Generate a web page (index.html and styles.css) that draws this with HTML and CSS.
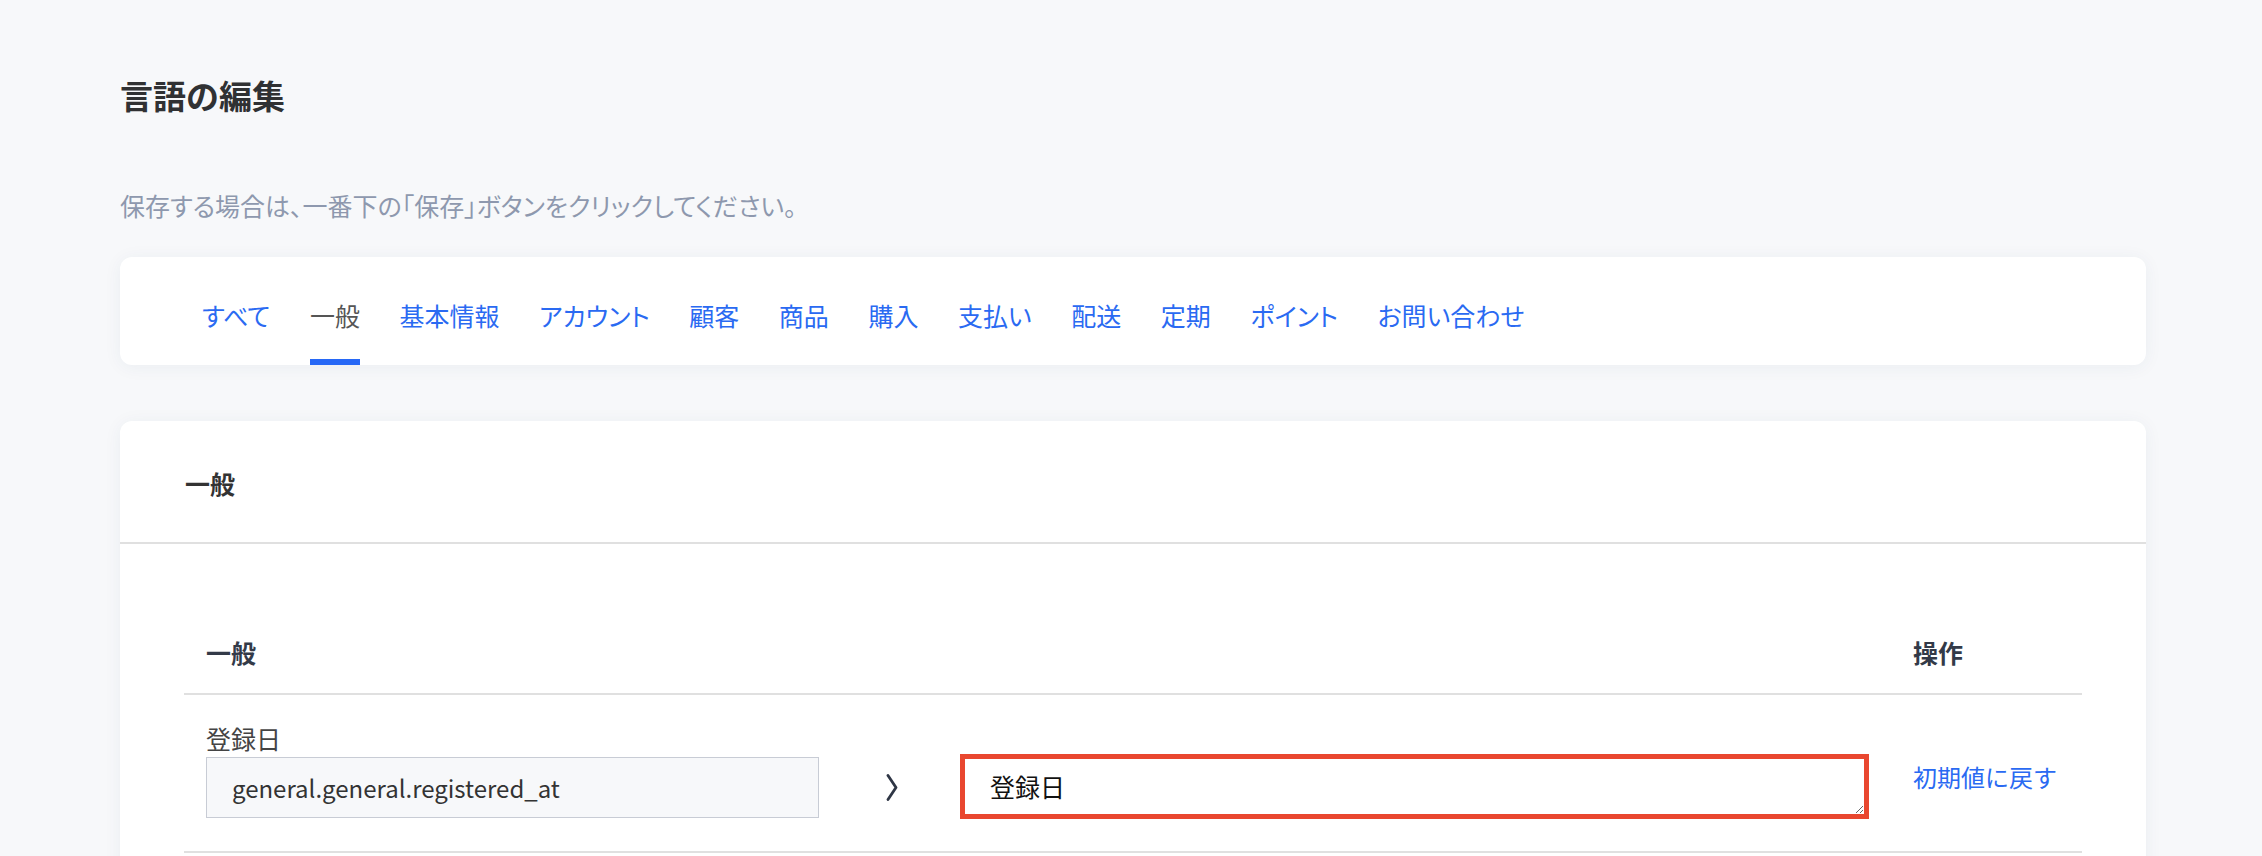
FILE: index.html
```html
<!DOCTYPE html>
<html lang="ja">
<head>
  <meta charset="UTF-8" />
  <meta name="viewport" content="width=device-width, initial-scale=1.0"/>
  <title>言語の編集</title>
  <link rel="stylesheet" href="styles.css">
</head>
<body>

<div class="page">
  <h1 class="title">言語の編集</h1>
  <p class="note">保存する場合は、一番下の「保存」ボタンをクリックしてください。</p>

  <nav class="card tabs">
    <a class="tab" href="#">すべて</a>
    <a class="tab active" href="#">一般</a>
    <a class="tab" href="#">基本情報</a>
    <a class="tab" href="#">アカウント</a>
    <a class="tab" href="#">顧客</a>
    <a class="tab" href="#">商品</a>
    <a class="tab" href="#">購入</a>
    <a class="tab" href="#">支払い</a>
    <a class="tab" href="#">配送</a>
    <a class="tab" href="#">定期</a>
    <a class="tab" href="#">ポイント</a>
    <a class="tab" href="#">お問い合わせ</a>
  </nav>

  <section class="card panel">
    <div class="panel-head">一般</div>
    <div class="panel-body">
      <div class="lang-row lang-head">
        <div class="cell">一般</div>
        <div class="cell"></div>
        <div class="cell"></div>
        <div class="cell">操作</div>
      </div>
      <div class="lang-row">
        <div class="cell key">
          <label for="key1">登録日</label>
          <input id="key1" type="text" value="general.general.registered_at" readonly />
        </div>
        <div class="cell arrow">
          <svg width="12" height="27" viewBox="0 0 12 27">
            <polyline points="2,1.5 10,13.5 2,25.5" fill="none" stroke="#2f3645" stroke-width="2.8" stroke-linejoin="round" stroke-linecap="round"/>
          </svg>
        </div>
        <div class="cell value">
          <textarea>登録日</textarea>
        </div>
        <div class="cell action">
          <a href="#">初期値に戻す</a>
        </div>
      </div>
    </div>
  </section>
</div>

</body>
</html>
```

FILE: styles.css
```css
body {
  margin: 0;
  font-family: "Noto Sans CJK JP", "Noto Sans", sans-serif;
  background: #f7f8fa;
  color: #333;
}
.page {
  padding: 71px 116px 0 120px;
}
.title {
  margin: 0;
  font-size: 33px;
  line-height: 48px;
  font-weight: 700;
  color: #303133;
}
.note {
  margin: 70px 0 0;
  font-size: 25px;
  line-height: 33px;
  color: #8e98ae;
  font-feature-settings: "palt";
}
.card {
  background: white;
  border-radius: 12px;
  box-shadow: 0 2px 18px rgba(40, 60, 100, 0.06);
}
.tabs {
  margin-top: 35px;
  display: flex;
  gap: 39.6px;
  padding: 0 82px;
}
.tab {
  padding: 40px 0 26px;
  border-bottom: 6px solid transparent;
  font-size: 25px;
  line-height: 36px;
  color: #2a6af2;
  text-decoration: none;
  font-feature-settings: "palt";
}
.tab.active {
  color: #555;
  border-bottom-color: #2768f6;
}
.panel {
  margin-top: 56px;
}
.panel-head {
  padding: 44px 65px 41px;
  font-size: 25px;
  line-height: 36px;
  font-weight: 700;
  color: #333;
  border-bottom: 2px solid #e0e0e0;
}
.panel-body {
  padding: 66px 64px 40px;
}
.lang-row {
  display: grid;
  grid-template-columns: 657px 97px 953px 1fr;
  height: 156px;
  align-items: end;
  border-bottom: 2px solid #e0e0e0;
  font-size: 25px;
  line-height: 36px;
}
.lang-row.lang-head {
  height: auto;
  align-items: center;
}
.lang-head .cell {
  padding: 24px 22px 23px;
  font-weight: 700;
  color: #333a48;
}
.cell {
  padding: 0 22px 33px;
}
.key label {
  display: block;
  margin-bottom: 1px;
  color: #444;
}
.key input {
  display: block;
  box-sizing: border-box;
  width: 613px;
  height: 61px;
  padding: 0 25px;
  border: 1px solid #c8ccd5;
  background: #f7f8fa;
  font-family: inherit;
  font-size: 24px;
  color: #333;
  outline: none;
}
.arrow {
  padding: 0 0 50px 45px;
  display: flex;
}
.value {
  padding-bottom: 32px;
}
.value textarea {
  display: block;
  box-sizing: border-box;
  width: 909px;
  height: 65px;
  padding: 9px 25px;
  border: 5px solid #e9472f;
  border-radius: 0;
  font-family: inherit;
  font-size: 25px;
  line-height: 36px;
  color: #111;
  outline: none;
}
.action {
  align-self: center;
  padding: 7px 0 0 22px;
  white-space: nowrap;
  font-size: 24px;
}
.action a {
  color: #2a6af2;
  text-decoration: none;
}
```
